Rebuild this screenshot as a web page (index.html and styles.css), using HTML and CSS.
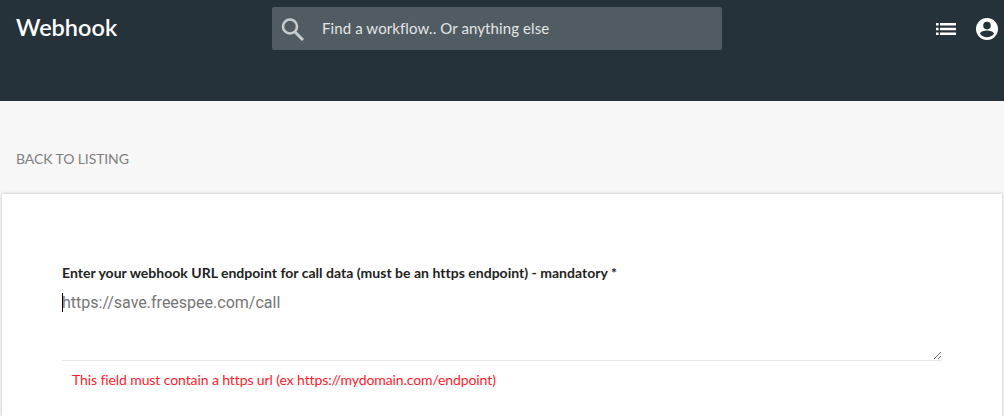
FILE: index.html
```html
<!DOCTYPE html>
<html lang="en">
<head>
<meta charset="utf-8">
<title>Webhook</title>
<link rel="stylesheet" href="styles.css">
</head>
<body>
<header class="topbar">
  <h1 class="title">Webhook</h1>
  <div class="search">
    <svg class="search-icon" viewBox="0 0 24 24" width="24" height="24"><circle cx="9" cy="9.500" r="7" fill="none" stroke="#c6cbcd" stroke-width="2.600"/><path d="M14 15l8 8" stroke="#c6cbcd" stroke-width="3" fill="none"/></svg>
    <span class="search-text">Find a workflow.. Or anything else</span>
  </div>
  <div class="actions">
    <svg class="list-icon" viewBox="0 0 20 12" width="20" height="12"><path fill="#fff" d="M0 0h2.600v2.400H0zM4 0h16v2.400H4zM0 4.800h2.600v2.400H0zM4 4.800h16v2.400H4zM0 9.600h2.600V12H0zM4 9.600h16V12H4z"/></svg>
    <svg class="user-icon" viewBox="0 0 24 24" width="24" height="24"><path fill="#fff" d="M12 1a11 11 0 1 0 0 22 11 11 0 0 0 0-22zm0 3.800a3.800 3.800 0 1 1 0 7.600 3.800 3.800 0 0 1 0-7.600zm0 15.400c-2.900 0-5.500-1.300-7-3.400 0-2.300 4.700-3.400 7-3.400s7 1.100 7 3.400c-1.500 2.100-4.100 3.400-7 3.400z"/></svg>
  </div>
</header>
<main class="page">
  <a class="back">BACK TO LISTING</a>
  <section class="card">
    <label class="label" for="url">Enter your webhook URL endpoint for call data (must be an https endpoint) - mandatory *</label>
    <div class="field">
      <span class="caret"></span>
      <textarea class="input" id="url" placeholder="https://save.freespee.com/call"></textarea>
    </div>
    <p class="error">This field must contain a https url (ex https://mydomain.com/endpoint)</p>
  </section>
</main>
</body>
</html>
```
FILE: styles.css
```css
* { box-sizing: border-box; }
html, body { margin: 0; height: 416px; overflow: hidden; }
body { background: #f7f7f7; font-family: "Lato", "Liberation Sans", sans-serif; }
.topbar { height: 101px; background: #25323a; display: flex; align-items: flex-start; padding: 7px 5px 0 16px; }
.title { margin: 0; width: 256px; color: #fff; font: 600 23.500px/41px "Lato", sans-serif; }
.search { width: 450px; height: 43px; background: #515c62; border-radius: 2px; display: flex; align-items: center; padding-left: 9px; }
.search-icon { flex: none; }
.search-text { margin: 0 0 2px 17px; color: #e2e5e6; font-size: 15px; letter-spacing: 0.1px; }
.actions { margin-left: auto; display: flex; align-items: center; height: 43px; gap: 19px; }
.list-icon { display: block; }
.user-icon { display: block; margin-top: 1px; }
.page { display: block; }
.back { display: block; padding: 50px 16px 0; height: 93px; color: #808080; font-size: 14px; line-height: 16px; letter-spacing: -0.1px; }
.card { margin: 0 2px; height: 222px; background: #fff; box-shadow: 0 0 3px rgba(0,0,0,0.25); padding: 71px 60px 0; }
.label { display: block; color: #222; font-size: 14px; font-weight: 700; line-height: 16px; letter-spacing: 0.02px; }
.field { position: relative; margin-top: 5px; width: 880px; height: 75px; }
.input { display: block; width: 100%; height: 75px; border: 0; border-bottom: 1px solid #e8e8e8; outline: 0; padding: 7px 0 0; margin: 0; font: 16px/20px "Roboto", sans-serif; color: #333; background: transparent; }
.input::placeholder { color: #757575; opacity: 1; }
.caret { position: absolute; left: 0; top: 7px; width: 1px; height: 19px; background: #000; }
.error { margin: 11px 0 0 10px; color: #ff1a2b; font-size: 14px; line-height: 16px; letter-spacing: -0.1px; }
```
